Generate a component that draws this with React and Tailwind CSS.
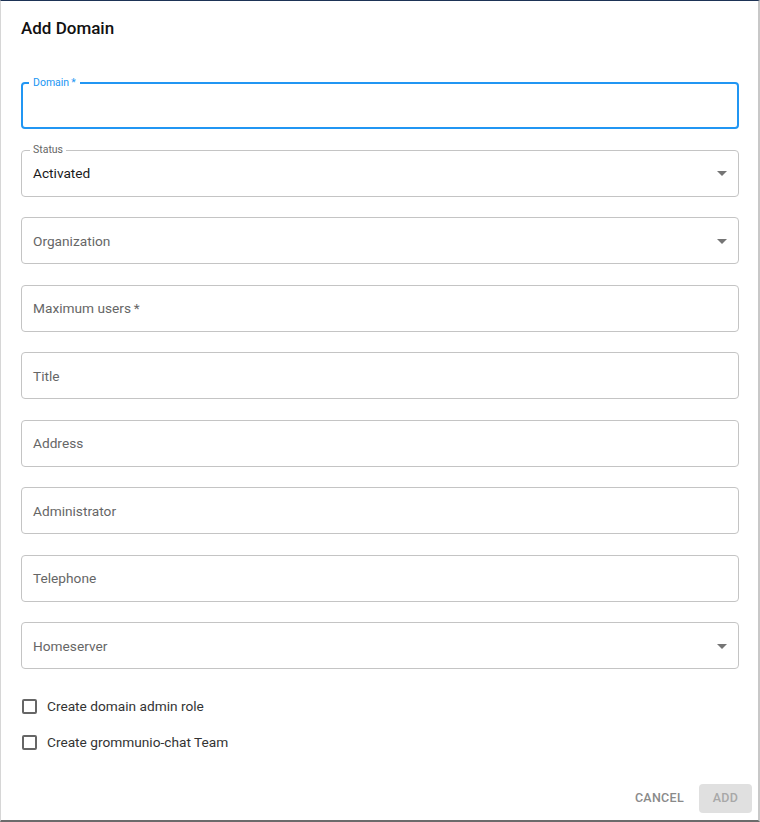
import { useState } from 'react';

const fields = [
  { label: 'Status', value: 'Activated', select: true },
  { label: 'Organization', select: true },
  { label: 'Maximum users', required: true },
  { label: 'Title' },
  { label: 'Address' },
  { label: 'Administrator' },
  { label: 'Telephone' },
  { label: 'Homeserver', select: true },
];

function ArrowDrop() {
  return (
    <svg viewBox="0 0 24 24" className="absolute right-[4px] top-1/2 -translate-y-1/2 w-6 h-6 fill-[#757575]">
      <path d="M7 10l5 5 5-5z" />
    </svg>
  );
}

function Field({ label, value, select, required }) {
  const filled = value !== undefined;
  return (
    <div className="relative h-[47px] rounded-[4px] border border-[#c4c4c4]">
      {filled ? (
        <>
          <span className="absolute -top-[8px] left-[8px] px-[3px] bg-white text-[10.5px] leading-[14px] text-[#666]">
            {label}
          </span>
          <span className="absolute left-[11px] top-1/2 -translate-y-1/2 text-[13.7px] text-[#1a1a1a]">{value}</span>
        </>
      ) : (
        <span className="absolute left-[11px] top-1/2 -translate-y-1/2 text-[13.7px] text-[#666]">
          {label}
          {required && <span>{'\u2009*'}</span>}
        </span>
      )}
      {select && <ArrowDrop />}
    </div>
  );
}

function Check({ label }) {
  const [on, setOn] = useState(false);
  return (
    <label className="flex items-center h-9 cursor-pointer" onClick={() => setOn(!on)}>
      <span className="ml-[1px] w-[15px] h-[15px] rounded-[2px] border-2 border-[#666]" />
      <span className="ml-[10px] text-[13.7px] text-[#333]">{label}</span>
    </label>
  );
}

export default function App() {
  return (
    <div
      className="w-[760px] h-[822px] bg-white border-t border-t-[#1d3356] border-l border-l-[#d6d6d6] border-r-2 border-r-[#c8c8c8] border-b-2 border-b-[#6b6b6b] flex flex-col"
      style={{ fontFamily: 'Roboto, "Liberation Sans", sans-serif' }}
    >
      <h2 className="pt-[15px] px-[20px] text-[17px] leading-6 font-medium text-[#111]">Add Domain</h2>

      <div className="mt-[42px] pl-[20px] pr-[19px] flex flex-col gap-[20.5px]">
        {/* focused domain input */}
        <div className="relative h-[47px] rounded-[4px] border-2 border-[#2196f3]">
          <span className="absolute -top-[8px] left-[6px] px-[4px] bg-white text-[10.5px] leading-[14px] text-[#2196f3]">
            Domain{'\u2009*'}
          </span>
        </div>
        {fields.map(f => (
          <Field key={f.label} {...f} />
        ))}
      </div>

      <div className="mt-[19px] px-[20px] flex flex-col">
        <Check label="Create domain admin role" />
        <Check label="Create grommunio-chat Team" />
      </div>

      <div className="mt-[24px] flex justify-end items-center gap-[7px] pr-[6px]">
        <button className="h-[29px] px-[8px] text-[12.5px] font-medium tracking-[0.3px] text-[#8a8a8a]">CANCEL</button>
        <button className="h-[29px] w-[53px] rounded-[4px] bg-[#e0e0e0] text-[12.5px] font-medium tracking-[0.3px] text-[#a8a8a8]">
          ADD
        </button>
      </div>
    </div>
  );
}
